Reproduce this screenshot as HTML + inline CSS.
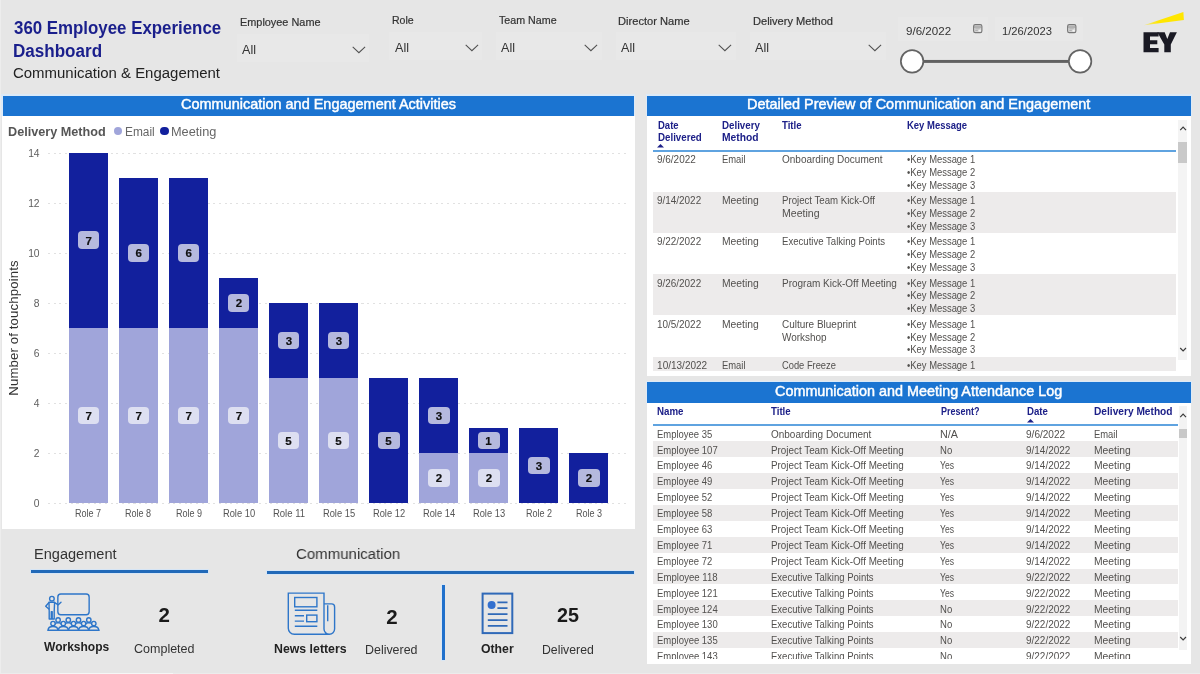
<!DOCTYPE html><html><head><meta charset="utf-8"><title>360 Employee Experience Dashboard</title><style>
html,body{margin:0;padding:0}body{width:1200px;height:674px;overflow:hidden;background:#e6e6e6;position:relative;font-family:"Liberation Sans",sans-serif}
#r{will-change:transform;position:absolute;left:0;top:0;width:1200px;height:674px;overflow:hidden}
#r div,#r span,#r svg{position:absolute}
#r span{white-space:nowrap;line-height:1em;display:block;transform-origin:0 50%}
#r span.c{transform-origin:50% 50%}
</style></head><body><div id="r">
<div style="left:237.00px;top:33.80px;width:132.00px;height:28.00px;background:#e8e8e8;"></div>
<svg style="left:352.0px;top:45.7px" width="14" height="8" viewBox="0 0 14 8"><path d="M0.700 0.900 L6.900 6.700 L13.100 0.900" fill="none" stroke="#505050" stroke-width="1.05"/></svg>
<div style="left:389.00px;top:31.60px;width:93.00px;height:28.00px;background:#e8e8e8;"></div>
<svg style="left:464.5px;top:43.8px" width="14" height="8" viewBox="0 0 14 8"><path d="M0.700 0.900 L6.900 6.700 L13.100 0.900" fill="none" stroke="#505050" stroke-width="1.05"/></svg>
<div style="left:496.00px;top:31.60px;width:106.00px;height:28.00px;background:#e8e8e8;"></div>
<svg style="left:584.2px;top:43.8px" width="14" height="8" viewBox="0 0 14 8"><path d="M0.700 0.900 L6.900 6.700 L13.100 0.900" fill="none" stroke="#505050" stroke-width="1.05"/></svg>
<div style="left:616.00px;top:31.80px;width:120.00px;height:28.00px;background:#e8e8e8;"></div>
<svg style="left:718.3px;top:43.8px" width="14" height="8" viewBox="0 0 14 8"><path d="M0.700 0.900 L6.900 6.700 L13.100 0.900" fill="none" stroke="#505050" stroke-width="1.05"/></svg>
<div style="left:750.00px;top:31.80px;width:136.00px;height:28.00px;background:#e8e8e8;"></div>
<svg style="left:867.5px;top:43.8px" width="14" height="8" viewBox="0 0 14 8"><path d="M0.700 0.900 L6.900 6.700 L13.100 0.900" fill="none" stroke="#505050" stroke-width="1.05"/></svg>
<div style="left:898.00px;top:16.50px;width:90.00px;height:24.00px;background:#e8e8e8;"></div>
<div style="left:994.70px;top:16.50px;width:88.00px;height:24.00px;background:#e8e8e8;"></div>
<svg style="left:972.6px;top:23.9px" width="10" height="10" viewBox="0 0 10 10"><rect x="0.600" y="0.600" width="8.300" height="8" rx="1.700" fill="#d4d4d4" stroke="#777" stroke-width="1.100"/><path d="M1 3H8.500" stroke="#888" stroke-width="0.900"/><path d="M2.300 4.800h4.500M2.300 6.500h2.500" stroke="#aaa" stroke-width="0.800"/><rect x="5.600" y="5.700" width="2.200" height="1.900" fill="#f4f4f4"/></svg>
<svg style="left:1066.9px;top:23.9px" width="10" height="10" viewBox="0 0 10 10"><rect x="0.600" y="0.600" width="8.300" height="8" rx="1.700" fill="#d4d4d4" stroke="#777" stroke-width="1.100"/><path d="M1 3H8.500" stroke="#888" stroke-width="0.900"/><path d="M2.300 4.800h4.500M2.300 6.500h2.500" stroke="#aaa" stroke-width="0.800"/><rect x="5.600" y="5.700" width="2.200" height="1.900" fill="#f4f4f4"/></svg>
<svg style="left:890px;top:40px" width="210" height="44" viewBox="0 0 210 44"><rect x="22" y="19.950" width="168" height="2.950" fill="#616161"/><circle cx="22.100" cy="21.350" r="11.250" fill="#fff" stroke="#636363" stroke-width="1.700"/><circle cx="190.100" cy="21.350" r="11.250" fill="#fff" stroke="#636363" stroke-width="1.700"/></svg>
<svg style="left:1140px;top:8px" width="50" height="48" viewBox="0 0 50 48"><defs><linearGradient id="bm" x1="0" x2="1" y1="0" y2="0"><stop offset="0" stop-color="#ffe600" stop-opacity="0.350"/><stop offset="0.350" stop-color="#ffe600"/></linearGradient></defs><polygon points="3.900,17.300 43.400,3.900 43.900,12.100" fill="url(#bm)"/><polygon fill="#1a1a24" points="3.500,24.300 18.600,24.300 18.600,28.600 10,28.600 10,32.200 17.300,32.200 17.300,36.300 10,36.300 10,40 18.600,40 18.600,44.300 3.500,44.300"/><polygon fill="#1a1a24" points="17.300,24.300 24.700,24.300 27.300,31 30,24.300 36.900,24.300 30.800,36.600 30.800,44.300 24.300,44.300 24.300,36.600"/></svg>
<div style="left:1.30px;top:94.40px;width:634.20px;height:21.60px;background:#dceaf8;"></div>
<div style="left:2.50px;top:95.60px;width:631.60px;height:20.30px;background:#1b74d1;"></div>
<div style="left:2.00px;top:116.00px;width:632.50px;height:413.00px;background:#fff;"></div>
<div style="left:113.6px;top:126.6px;width:8.8px;height:8.8px;border-radius:50%;background:#a0a5da"></div>
<div style="left:160.0px;top:126.6px;width:8.8px;height:8.8px;border-radius:50%;background:#12209d"></div>
<div style="left:48px;top:503.00px;width:581px;height:1.200px;background:repeating-linear-gradient(90deg,#e1e1e1 0 2px,transparent 2px 5.700px)"></div>
<div style="left:48px;top:452.96px;width:581px;height:1.200px;background:repeating-linear-gradient(90deg,#e1e1e1 0 2px,transparent 2px 5.700px)"></div>
<div style="left:48px;top:402.92px;width:581px;height:1.200px;background:repeating-linear-gradient(90deg,#e1e1e1 0 2px,transparent 2px 5.700px)"></div>
<div style="left:48px;top:352.88px;width:581px;height:1.200px;background:repeating-linear-gradient(90deg,#e1e1e1 0 2px,transparent 2px 5.700px)"></div>
<div style="left:48px;top:302.84px;width:581px;height:1.200px;background:repeating-linear-gradient(90deg,#e1e1e1 0 2px,transparent 2px 5.700px)"></div>
<div style="left:48px;top:252.80px;width:581px;height:1.200px;background:repeating-linear-gradient(90deg,#e1e1e1 0 2px,transparent 2px 5.700px)"></div>
<div style="left:48px;top:202.76px;width:581px;height:1.200px;background:repeating-linear-gradient(90deg,#e1e1e1 0 2px,transparent 2px 5.700px)"></div>
<div style="left:48px;top:152.72px;width:581px;height:1.200px;background:repeating-linear-gradient(90deg,#e1e1e1 0 2px,transparent 2px 5.700px)"></div>
<span class="c" style="left:14.1px;top:327.6px;font-size:13.2px;color:#333;transform:translate(-50%,-50%) rotate(-90deg);letter-spacing:0.13px">Number of touchpoints</span>
<div style="left:69.00px;top:327.96px;width:39.10px;height:175.14px;background:#a0a5da;"></div>
<div style="left:69.00px;top:152.82px;width:39.10px;height:175.14px;background:#12209d;"></div>
<div style="left:77.75px;top:406.63px;width:21.6px;height:17.8px;border-radius:4px;background:#dddff1"></div>
<div style="left:77.75px;top:231.49px;width:21.6px;height:17.8px;border-radius:4px;background:#b5b9de"></div>
<div style="left:119.03px;top:327.96px;width:39.10px;height:175.14px;background:#a0a5da;"></div>
<div style="left:119.03px;top:177.84px;width:39.10px;height:150.12px;background:#12209d;"></div>
<div style="left:127.78px;top:406.63px;width:21.6px;height:17.8px;border-radius:4px;background:#dddff1"></div>
<div style="left:127.78px;top:244.00px;width:21.6px;height:17.8px;border-radius:4px;background:#b5b9de"></div>
<div style="left:169.06px;top:327.96px;width:39.10px;height:175.14px;background:#a0a5da;"></div>
<div style="left:169.06px;top:177.84px;width:39.10px;height:150.12px;background:#12209d;"></div>
<div style="left:177.81px;top:406.63px;width:21.6px;height:17.8px;border-radius:4px;background:#dddff1"></div>
<div style="left:177.81px;top:244.00px;width:21.6px;height:17.8px;border-radius:4px;background:#b5b9de"></div>
<div style="left:219.09px;top:327.96px;width:39.10px;height:175.14px;background:#a0a5da;"></div>
<div style="left:219.09px;top:277.92px;width:39.10px;height:50.04px;background:#12209d;"></div>
<div style="left:227.84px;top:406.63px;width:21.6px;height:17.8px;border-radius:4px;background:#dddff1"></div>
<div style="left:227.84px;top:294.04px;width:21.6px;height:17.8px;border-radius:4px;background:#b5b9de"></div>
<div style="left:269.12px;top:378.00px;width:39.10px;height:125.10px;background:#a0a5da;"></div>
<div style="left:269.12px;top:302.94px;width:39.10px;height:75.06px;background:#12209d;"></div>
<div style="left:277.87px;top:431.65px;width:21.6px;height:17.8px;border-radius:4px;background:#dddff1"></div>
<div style="left:277.87px;top:331.57px;width:21.6px;height:17.8px;border-radius:4px;background:#b5b9de"></div>
<div style="left:319.15px;top:378.00px;width:39.10px;height:125.10px;background:#a0a5da;"></div>
<div style="left:319.15px;top:302.94px;width:39.10px;height:75.06px;background:#12209d;"></div>
<div style="left:327.90px;top:431.65px;width:21.6px;height:17.8px;border-radius:4px;background:#dddff1"></div>
<div style="left:327.90px;top:331.57px;width:21.6px;height:17.8px;border-radius:4px;background:#b5b9de"></div>
<div style="left:369.18px;top:378.00px;width:39.10px;height:125.10px;background:#12209d;"></div>
<div style="left:377.93px;top:431.65px;width:21.6px;height:17.8px;border-radius:4px;background:#b5b9de"></div>
<div style="left:419.21px;top:453.06px;width:39.10px;height:50.04px;background:#a0a5da;"></div>
<div style="left:419.21px;top:378.00px;width:39.10px;height:75.06px;background:#12209d;"></div>
<div style="left:427.96px;top:469.18px;width:21.6px;height:17.8px;border-radius:4px;background:#dddff1"></div>
<div style="left:427.96px;top:406.63px;width:21.6px;height:17.8px;border-radius:4px;background:#b5b9de"></div>
<div style="left:469.24px;top:453.06px;width:39.10px;height:50.04px;background:#a0a5da;"></div>
<div style="left:469.24px;top:428.04px;width:39.10px;height:25.02px;background:#12209d;"></div>
<div style="left:477.99px;top:469.18px;width:21.6px;height:17.8px;border-radius:4px;background:#dddff1"></div>
<div style="left:477.99px;top:431.65px;width:21.6px;height:17.8px;border-radius:4px;background:#b5b9de"></div>
<div style="left:519.27px;top:428.04px;width:39.10px;height:75.06px;background:#12209d;"></div>
<div style="left:528.02px;top:456.67px;width:21.6px;height:17.8px;border-radius:4px;background:#b5b9de"></div>
<div style="left:569.30px;top:453.06px;width:39.10px;height:50.04px;background:#12209d;"></div>
<div style="left:578.05px;top:469.18px;width:21.6px;height:17.8px;border-radius:4px;background:#b5b9de"></div>
<div style="left:30.00px;top:569.10px;width:179.30px;height:5.00px;background:#d6e5f5;"></div>
<div style="left:31.00px;top:570.10px;width:177.40px;height:3.00px;background:#2169b8;"></div>
<div style="left:265.70px;top:569.90px;width:369.30px;height:5.20px;background:#d6e5f5;"></div>
<div style="left:266.70px;top:570.90px;width:367.40px;height:3.20px;background:#2169b8;"></div>
<div style="left:441.20px;top:584.30px;width:4.20px;height:76.60px;background:#d9e7f5;"></div>
<div style="left:441.90px;top:585.00px;width:2.80px;height:75.20px;background:#2070cc;"></div>
<svg style="left:44px;top:591px" width="58" height="42" viewBox="0 0 58 42" fill="none" stroke="#2e76c9" stroke-width="1.4" stroke-linejoin="round" stroke-linecap="round">
<rect x="13.850" y="3.050" width="31.300" height="20.700" rx="3"/>
<circle cx="7.900" cy="7.700" r="2.300"/>
<path d="M5 11.300H10.600L10.200 20.200V28H8.200V20.600H7.300V28H5.200V20.200Z"/>
<path d="M5 11.500L1.700 15.200L4.900 18"/>
<path d="M10.600 11.600L14.300 13.800L17 11.300"/>
<circle cx="14.1" cy="29" r="2.2"/><path d="M10.6 33.6Q11.1 31.8 14.1 31.8Q17.1 31.8 17.6 33.6"/><circle cx="24.3" cy="29" r="2.2"/><path d="M20.8 33.6Q21.3 31.8 24.3 31.8Q27.3 31.8 27.8 33.6"/><circle cx="34.5" cy="29" r="2.2"/><path d="M31.0 33.6Q31.5 31.8 34.5 31.8Q37.5 31.8 38.0 33.6"/><circle cx="44.8" cy="29" r="2.2"/><path d="M41.3 33.6Q41.8 31.8 44.8 31.8Q47.8 31.8 48.3 33.6"/><circle cx="9" cy="32.6" r="2.2" fill="#e6e6e6"/><path d="M4.1 39.2C4.1 36.6 6.4 35.5 9 35.5S13.9 36.6 13.9 39.2"/><circle cx="19.3" cy="32.6" r="2.2" fill="#e6e6e6"/><path d="M14.4 39.2C14.4 36.6 16.7 35.5 19.3 35.5S24.2 36.6 24.2 39.2"/><circle cx="29.5" cy="32.6" r="2.2" fill="#e6e6e6"/><path d="M24.6 39.2C24.6 36.6 26.9 35.5 29.5 35.5S34.4 36.6 34.4 39.2"/><circle cx="39.6" cy="32.6" r="2.2" fill="#e6e6e6"/><path d="M34.7 39.2C34.7 36.6 37.0 35.5 39.6 35.5S44.5 36.6 44.5 39.2"/><circle cx="49.8" cy="32.6" r="2.2" fill="#e6e6e6"/><path d="M44.9 39.2C44.9 36.6 47.2 35.5 49.8 35.5S54.7 36.6 54.7 39.2"/>
<path d="M4 39.300H55" stroke-width="1.500"/>
</svg>
<svg style="left:285px;top:591px" width="53" height="46" viewBox="0 0 53 46" fill="none" stroke="#2e76c9" stroke-width="1.400">
<path d="M44.300 43.200H9.300A6 6 0 0 1 3.300 37.200V2.100H39V38A5.300 5.300 0 0 0 49.600 38V15.900A3 3 0 0 0 46.600 12.900H39"/>
<path d="M42.700 14.200V30.200"/>
<rect x="9.700" y="6.500" width="22.200" height="9.300"/>
<path d="M9.800 19.300H32.300M9.800 24.800H19M9.800 30.100H19M9.800 35.300H32.300"/>
<rect x="21.700" y="24.100" width="10.200" height="6.600"/>
</svg>
<svg style="left:480px;top:591px" width="36" height="45" viewBox="0 0 36 45" fill="none" stroke="#2f69b8" stroke-width="2">
<rect x="2.600" y="2.600" width="29.700" height="39.500"/>
<circle cx="11.600" cy="14" r="4" fill="#3370cf" stroke="none"/>
<path d="M17.400 11.400H27.500M17.400 17.200H27.500M7.800 23.200H27.500M7.800 29.200H27.500M7.800 34.900H27.500" stroke-width="1.700"/>
</svg>
<div style="left:645.80px;top:94.40px;width:546.40px;height:21.60px;background:#dceaf8;"></div>
<div style="left:647.00px;top:95.60px;width:544.00px;height:20.30px;background:#1b74d1;"></div>
<div style="left:647.00px;top:116.00px;width:544.00px;height:260.00px;background:#fff;"></div>
<svg style="left:657.2px;top:144px" width="7" height="4" viewBox="0 0 7 4"><polygon points="0,3.600 3.500,0 7,3.600" fill="#1d2088"/></svg>
<div style="left:652.50px;top:150.20px;width:523.50px;height:1.50px;background:#5fa3e0;"></div>
<div style="left:653.00px;top:191.62px;width:523.00px;height:41.22px;background:#edebeb;"></div>
<div style="left:653.00px;top:274.06px;width:523.00px;height:41.22px;background:#edebeb;"></div>
<div style="left:653.00px;top:356.50px;width:523.00px;height:14.80px;background:#edebeb;"></div>
<div style="left:1178.40px;top:120.00px;width:8.40px;height:240.00px;background:#f4f4f4;"></div>
<div style="left:1178.40px;top:141.90px;width:8.40px;height:21.60px;background:#c9c9c9;"></div>
<svg style="left:1179px;top:124.500px" width="8" height="6" viewBox="0 0 8 6"><path d="M1.200 5.100 L4.100 2.100 L7 5.100" fill="none" stroke="#3a3a3a" stroke-width="1.150"/></svg>
<svg style="left:1179px;top:347px" width="8" height="6" viewBox="0 0 8 6"><path d="M1.200 1 L4.100 4 L7 1" fill="none" stroke="#3a3a3a" stroke-width="1.150"/></svg>
<div style="left:645.80px;top:380.80px;width:546.40px;height:22.00px;background:#dceaf8;"></div>
<div style="left:647.00px;top:382.00px;width:544.00px;height:20.70px;background:#1b74d1;"></div>
<div style="left:647.00px;top:402.70px;width:544.00px;height:261.30px;background:#fff;"></div>
<svg style="left:1026.500px;top:418.600px" width="7" height="4" viewBox="0 0 7 4"><polygon points="0,3.600 3.500,0 7,3.600" fill="#1d2088"/></svg>
<div style="left:652.50px;top:424.10px;width:525.10px;height:1.50px;background:#5fa3e0;"></div>
<div style="left:653.00px;top:441.30px;width:524.60px;height:15.90px;background:#edebeb;"></div>
<div style="left:653.00px;top:473.10px;width:524.60px;height:15.90px;background:#edebeb;"></div>
<div style="left:653.00px;top:504.90px;width:524.60px;height:15.90px;background:#edebeb;"></div>
<div style="left:653.00px;top:536.70px;width:524.60px;height:15.90px;background:#edebeb;"></div>
<div style="left:653.00px;top:568.50px;width:524.60px;height:15.90px;background:#edebeb;"></div>
<div style="left:653.00px;top:600.30px;width:524.60px;height:15.90px;background:#edebeb;"></div>
<div style="left:653.00px;top:632.10px;width:524.60px;height:15.90px;background:#edebeb;"></div>
<div style="left:1178.50px;top:406.00px;width:8.50px;height:244.00px;background:#f3f3f3;"></div>
<div style="left:1178.50px;top:428.70px;width:8.50px;height:9.50px;background:#c8c8c8;"></div>
<svg style="left:1179px;top:411.500px" width="8" height="6" viewBox="0 0 8 6"><path d="M1.200 5.100 L4.100 2.100 L7 5.100" fill="none" stroke="#3a3a3a" stroke-width="1.150"/></svg>
<svg style="left:1179px;top:636px" width="8" height="6" viewBox="0 0 8 6"><path d="M1.200 1 L4.100 4 L7 1" fill="none" stroke="#3a3a3a" stroke-width="1.150"/></svg>
<span style="left:13.60px;top:19.55px;font-size:17.5px;color:#1a1f8c;font-weight:700;transform:scaleX(0.9635);">360 Employee Experience</span>
<span style="left:12.63px;top:42.55px;font-size:17.5px;color:#1a1f8c;font-weight:700;transform:scaleX(0.9742);">Dashboard</span>
<span style="left:13.40px;top:65.05px;font-size:15.5px;color:#222;transform:scaleX(0.9646);">Communication &amp; Engagement</span>
<span style="left:239.50px;top:16.90px;font-size:10.8px;color:#333;transform:scaleX(1.0087);-webkit-text-stroke:0.2px #333;">Employee Name</span>
<span style="left:242.00px;top:44.30px;font-size:12px;color:#333;transform:scaleX(1.0497);">All</span>
<span style="left:392.00px;top:14.90px;font-size:10.8px;color:#333;transform:scaleX(0.9775);-webkit-text-stroke:0.2px #333;">Role</span>
<span style="left:394.70px;top:42.30px;font-size:12px;color:#333;transform:scaleX(1.0497);">All</span>
<span style="left:499.20px;top:14.90px;font-size:10.8px;color:#333;transform:scaleX(0.9897);-webkit-text-stroke:0.2px #333;">Team Name</span>
<span style="left:501.40px;top:42.30px;font-size:12px;color:#333;transform:scaleX(1.0497);">All</span>
<span style="left:618.30px;top:15.90px;font-size:10.8px;color:#333;transform:scaleX(1.0303);-webkit-text-stroke:0.2px #333;">Director Name</span>
<span style="left:621.30px;top:42.30px;font-size:12px;color:#333;transform:scaleX(1.0497);">All</span>
<span style="left:752.50px;top:15.90px;font-size:10.8px;color:#333;transform:scaleX(1.0256);-webkit-text-stroke:0.2px #333;">Delivery Method</span>
<span style="left:755.00px;top:42.30px;font-size:12px;color:#333;transform:scaleX(1.0497);">All</span>
<span style="left:905.90px;top:25.65px;font-size:11.3px;color:#333;transform:scaleX(1.0254);">9/6/2022</span>
<span style="left:1001.90px;top:25.65px;font-size:11.3px;color:#333;transform:scaleX(0.9925);">1/26/2023</span>
<span style="left:180.80px;top:97.15px;font-size:14.3px;color:#fff;transform:scaleX(1.0120);-webkit-text-stroke:0.45px #fff;">Communication and Engagement Activities</span>
<span style="left:8.00px;top:126.05px;font-size:12.5px;color:#555;font-weight:700;transform:scaleX(1.0113);">Delivery Method</span>
<span style="left:124.65px;top:126.05px;font-size:12.5px;color:#666;transform:scaleX(0.9498);">Email</span>
<span style="left:170.98px;top:126.05px;font-size:12.5px;color:#666;transform:scaleX(1.0203);">Meeting</span>
<span style="left:39.60px;top:498.65px;font-size:10.3px;color:#5e5e5e;transform:translateX(-100%);">0</span>
<span style="left:39.60px;top:448.65px;font-size:10.3px;color:#5e5e5e;transform:translateX(-100%);">2</span>
<span style="left:39.60px;top:398.65px;font-size:10.3px;color:#5e5e5e;transform:translateX(-100%);">4</span>
<span style="left:39.60px;top:348.65px;font-size:10.3px;color:#5e5e5e;transform:translateX(-100%);">6</span>
<span style="left:39.60px;top:298.65px;font-size:10.3px;color:#5e5e5e;transform:translateX(-100%);">8</span>
<span style="left:39.60px;top:248.65px;font-size:10.3px;color:#5e5e5e;transform:translateX(-100%);">10</span>
<span style="left:39.60px;top:198.65px;font-size:10.3px;color:#5e5e5e;transform:translateX(-100%);">12</span>
<span style="left:39.60px;top:148.65px;font-size:10.3px;color:#5e5e5e;transform:translateX(-100%);">14</span>
<span class="c" style="left:88.75px;top:410.55px;font-size:11.5px;color:#111;font-weight:700;transform:translateX(-50%);-webkit-text-stroke:0.2px #111;">7</span>
<span class="c" style="left:88.75px;top:235.55px;font-size:11.5px;color:#111;font-weight:700;transform:translateX(-50%);-webkit-text-stroke:0.2px #111;">7</span>
<span class="c" style="left:88.45px;top:508.60px;font-size:10.4px;color:#555;transform:translateX(-50%) scaleX(0.8692);">Role 7</span>
<span class="c" style="left:138.78px;top:410.55px;font-size:11.5px;color:#111;font-weight:700;transform:translateX(-50%);-webkit-text-stroke:0.2px #111;">7</span>
<span class="c" style="left:138.78px;top:247.55px;font-size:11.5px;color:#111;font-weight:700;transform:translateX(-50%);-webkit-text-stroke:0.2px #111;">6</span>
<span class="c" style="left:138.48px;top:508.60px;font-size:10.4px;color:#555;transform:translateX(-50%) scaleX(0.8692);">Role 8</span>
<span class="c" style="left:188.81px;top:410.55px;font-size:11.5px;color:#111;font-weight:700;transform:translateX(-50%);-webkit-text-stroke:0.2px #111;">7</span>
<span class="c" style="left:188.81px;top:247.55px;font-size:11.5px;color:#111;font-weight:700;transform:translateX(-50%);-webkit-text-stroke:0.2px #111;">6</span>
<span class="c" style="left:188.51px;top:508.60px;font-size:10.4px;color:#555;transform:translateX(-50%) scaleX(0.8692);">Role 9</span>
<span class="c" style="left:238.84px;top:410.55px;font-size:11.5px;color:#111;font-weight:700;transform:translateX(-50%);-webkit-text-stroke:0.2px #111;">7</span>
<span class="c" style="left:238.84px;top:297.55px;font-size:11.5px;color:#111;font-weight:700;transform:translateX(-50%);-webkit-text-stroke:0.2px #111;">2</span>
<span class="c" style="left:238.54px;top:508.60px;font-size:10.4px;color:#555;transform:translateX(-50%) scaleX(0.8991);">Role 10</span>
<span class="c" style="left:288.37px;top:435.55px;font-size:11.5px;color:#111;font-weight:700;transform:translateX(-50%);-webkit-text-stroke:0.2px #111;">5</span>
<span class="c" style="left:288.87px;top:335.55px;font-size:11.5px;color:#111;font-weight:700;transform:translateX(-50%);-webkit-text-stroke:0.2px #111;">3</span>
<span class="c" style="left:288.57px;top:508.60px;font-size:10.4px;color:#555;transform:translateX(-50%) scaleX(0.9188);">Role 11</span>
<span class="c" style="left:338.40px;top:435.55px;font-size:11.5px;color:#111;font-weight:700;transform:translateX(-50%);-webkit-text-stroke:0.2px #111;">5</span>
<span class="c" style="left:338.90px;top:335.55px;font-size:11.5px;color:#111;font-weight:700;transform:translateX(-50%);-webkit-text-stroke:0.2px #111;">3</span>
<span class="c" style="left:338.60px;top:508.60px;font-size:10.4px;color:#555;transform:translateX(-50%) scaleX(0.8991);">Role 15</span>
<span class="c" style="left:388.43px;top:435.55px;font-size:11.5px;color:#111;font-weight:700;transform:translateX(-50%);-webkit-text-stroke:0.2px #111;">5</span>
<span class="c" style="left:388.63px;top:508.60px;font-size:10.4px;color:#555;transform:translateX(-50%) scaleX(0.8991);">Role 12</span>
<span class="c" style="left:438.96px;top:472.55px;font-size:11.5px;color:#111;font-weight:700;transform:translateX(-50%);-webkit-text-stroke:0.2px #111;">2</span>
<span class="c" style="left:438.96px;top:410.55px;font-size:11.5px;color:#111;font-weight:700;transform:translateX(-50%);-webkit-text-stroke:0.2px #111;">3</span>
<span class="c" style="left:438.66px;top:508.60px;font-size:10.4px;color:#555;transform:translateX(-50%) scaleX(0.8991);">Role 14</span>
<span class="c" style="left:488.99px;top:472.55px;font-size:11.5px;color:#111;font-weight:700;transform:translateX(-50%);-webkit-text-stroke:0.2px #111;">2</span>
<span class="c" style="left:488.49px;top:435.55px;font-size:11.5px;color:#111;font-weight:700;transform:translateX(-50%);-webkit-text-stroke:0.2px #111;">1</span>
<span class="c" style="left:488.69px;top:508.60px;font-size:10.4px;color:#555;transform:translateX(-50%) scaleX(0.8991);">Role 13</span>
<span class="c" style="left:539.02px;top:460.55px;font-size:11.5px;color:#111;font-weight:700;transform:translateX(-50%);-webkit-text-stroke:0.2px #111;">3</span>
<span class="c" style="left:538.72px;top:508.60px;font-size:10.4px;color:#555;transform:translateX(-50%) scaleX(0.8692);">Role 2</span>
<span class="c" style="left:589.05px;top:472.55px;font-size:11.5px;color:#111;font-weight:700;transform:translateX(-50%);-webkit-text-stroke:0.2px #111;">2</span>
<span class="c" style="left:588.75px;top:508.60px;font-size:10.4px;color:#555;transform:translateX(-50%) scaleX(0.8692);">Role 3</span>
<span style="left:34.06px;top:546.05px;font-size:15.5px;color:#333;transform:scaleX(0.9396);">Engagement</span>
<span style="left:43.70px;top:640.30px;font-size:13px;color:#222;font-weight:700;transform:scaleX(0.9244);">Workshops</span>
<span class="c" style="left:164.20px;top:604.55px;font-size:20.5px;color:#1a1a1a;font-weight:700;transform:translateX(-50%);">2</span>
<span style="left:134.00px;top:642.30px;font-size:13px;color:#333;transform:scaleX(0.9627);">Completed</span>
<span style="left:295.70px;top:546.05px;font-size:15.5px;color:#333;transform:scaleX(0.9677);">Communication</span>
<span style="left:274.30px;top:642.30px;font-size:13px;color:#222;font-weight:700;transform:scaleX(0.9481);">News letters</span>
<span class="c" style="left:391.90px;top:606.55px;font-size:20.5px;color:#1a1a1a;font-weight:700;transform:translateX(-50%);">2</span>
<span style="left:365.04px;top:643.30px;font-size:13px;color:#333;transform:scaleX(0.9556);">Delivered</span>
<span style="left:480.70px;top:642.30px;font-size:13px;color:#222;font-weight:700;transform:scaleX(0.9419);">Other</span>
<span style="left:556.70px;top:604.55px;font-size:20.5px;color:#1a1a1a;font-weight:700;transform:scaleX(0.9642);">25</span>
<span style="left:541.76px;top:643.30px;font-size:13px;color:#333;transform:scaleX(0.9426);">Delivered</span>
<span style="left:746.99px;top:97.15px;font-size:14.3px;color:#fff;transform:scaleX(1.0119);-webkit-text-stroke:0.45px #fff;">Detailed Preview of Communication and Engagement</span>
<span style="left:657.80px;top:120.80px;font-size:10px;color:#1d2088;font-weight:700;transform:scaleX(0.9497);">Date</span>
<span style="left:657.80px;top:132.80px;font-size:10px;color:#1d2088;font-weight:700;transform:scaleX(0.9729);">Delivered</span>
<span style="left:722.20px;top:120.80px;font-size:10px;color:#1d2088;font-weight:700;transform:scaleX(0.9732);">Delivery</span>
<span style="left:722.20px;top:132.80px;font-size:10px;color:#1d2088;font-weight:700;transform:scaleX(1.0271);">Method</span>
<span style="left:782.00px;top:120.80px;font-size:10px;color:#1d2088;font-weight:700;transform:scaleX(0.9609);">Title</span>
<span style="left:907.00px;top:120.80px;font-size:10px;color:#1d2088;font-weight:700;transform:scaleX(0.9482);">Key Message</span>
<span style="left:657.10px;top:154.80px;font-size:10px;color:#52504e;transform:scaleX(0.9958);">9/6/2022</span>
<span style="left:722.00px;top:154.80px;font-size:10px;color:#52504e;transform:scaleX(0.9402);">Email</span>
<span style="left:782.00px;top:154.80px;font-size:10px;color:#52504e;">Onboarding Document</span>
<span style="left:907.00px;top:154.80px;font-size:10px;color:#52504e;transform:scaleX(0.9415);">•Key Message 1</span>
<span style="left:907.00px;top:167.80px;font-size:10px;color:#52504e;transform:scaleX(0.9415);">•Key Message 2</span>
<span style="left:907.00px;top:180.80px;font-size:10px;color:#52504e;transform:scaleX(0.9415);">•Key Message 3</span>
<span style="left:657.10px;top:195.80px;font-size:10px;color:#52504e;transform:scaleX(0.9927);">9/14/2022</span>
<span style="left:722.00px;top:195.80px;font-size:10px;color:#52504e;transform:scaleX(1.0339);">Meeting</span>
<span style="left:782.00px;top:195.80px;font-size:10px;color:#52504e;transform:scaleX(0.9645);">Project Team Kick-Off</span>
<span style="left:782.00px;top:208.80px;font-size:10px;color:#52504e;transform:scaleX(1.0567);">Meeting</span>
<span style="left:907.00px;top:195.80px;font-size:10px;color:#52504e;transform:scaleX(0.9415);">•Key Message 1</span>
<span style="left:907.00px;top:208.80px;font-size:10px;color:#52504e;transform:scaleX(0.9415);">•Key Message 2</span>
<span style="left:907.00px;top:221.80px;font-size:10px;color:#52504e;transform:scaleX(0.9415);">•Key Message 3</span>
<span style="left:657.10px;top:236.80px;font-size:10px;color:#52504e;transform:scaleX(0.9927);">9/22/2022</span>
<span style="left:722.00px;top:236.80px;font-size:10px;color:#52504e;transform:scaleX(1.0339);">Meeting</span>
<span style="left:782.00px;top:236.80px;font-size:10px;color:#52504e;transform:scaleX(0.9580);">Executive Talking Points</span>
<span style="left:907.00px;top:236.80px;font-size:10px;color:#52504e;transform:scaleX(0.9415);">•Key Message 1</span>
<span style="left:907.00px;top:249.80px;font-size:10px;color:#52504e;transform:scaleX(0.9415);">•Key Message 2</span>
<span style="left:907.00px;top:262.80px;font-size:10px;color:#52504e;transform:scaleX(0.9415);">•Key Message 3</span>
<span style="left:657.10px;top:278.80px;font-size:10px;color:#52504e;transform:scaleX(0.9927);">9/26/2022</span>
<span style="left:722.00px;top:278.80px;font-size:10px;color:#52504e;transform:scaleX(1.0339);">Meeting</span>
<span style="left:782.00px;top:278.80px;font-size:10px;color:#52504e;">Program Kick-Off Meeting</span>
<span style="left:907.00px;top:278.80px;font-size:10px;color:#52504e;transform:scaleX(0.9415);">•Key Message 1</span>
<span style="left:907.00px;top:290.80px;font-size:10px;color:#52504e;transform:scaleX(0.9415);">•Key Message 2</span>
<span style="left:907.00px;top:303.80px;font-size:10px;color:#52504e;transform:scaleX(0.9415);">•Key Message 3</span>
<span style="left:657.10px;top:319.80px;font-size:10px;color:#52504e;transform:scaleX(0.9927);">10/5/2022</span>
<span style="left:722.00px;top:319.80px;font-size:10px;color:#52504e;transform:scaleX(1.0339);">Meeting</span>
<span style="left:782.00px;top:319.80px;font-size:10px;color:#52504e;transform:scaleX(0.9973);">Culture Blueprint</span>
<span style="left:782.00px;top:332.80px;font-size:10px;color:#52504e;transform:scaleX(0.9940);">Workshop</span>
<span style="left:907.00px;top:319.80px;font-size:10px;color:#52504e;transform:scaleX(0.9415);">•Key Message 1</span>
<span style="left:907.00px;top:332.80px;font-size:10px;color:#52504e;transform:scaleX(0.9415);">•Key Message 2</span>
<span style="left:907.00px;top:344.80px;font-size:10px;color:#52504e;transform:scaleX(0.9415);">•Key Message 3</span>
<span style="left:657.10px;top:360.80px;font-size:10px;color:#52504e;">10/13/2022</span>
<span style="left:722.00px;top:360.80px;font-size:10px;color:#52504e;transform:scaleX(0.9402);">Email</span>
<span style="left:782.00px;top:360.80px;font-size:10px;color:#52504e;transform:scaleX(0.9323);">Code Freeze</span>
<span style="left:907.00px;top:360.80px;font-size:10px;color:#52504e;transform:scaleX(0.9415);">•Key Message 1</span>
<span style="left:774.70px;top:384.15px;font-size:14.3px;color:#fff;transform:scaleX(1.0064);-webkit-text-stroke:0.45px #fff;">Communication and Meeting Attendance Log</span>
<span style="left:657.10px;top:406.80px;font-size:10px;color:#1d2088;font-weight:700;transform:scaleX(0.9720);">Name</span>
<span style="left:771.20px;top:406.80px;font-size:10px;color:#1d2088;font-weight:700;transform:scaleX(0.9657);">Title</span>
<span style="left:940.80px;top:406.80px;font-size:10px;color:#1d2088;font-weight:700;transform:scaleX(0.8996);">Present?</span>
<span style="left:1026.70px;top:406.80px;font-size:10px;color:#1d2088;font-weight:700;transform:scaleX(0.9632);">Date</span>
<span style="left:1094.00px;top:406.80px;font-size:10px;color:#1d2088;font-weight:700;transform:scaleX(1.0164);">Delivery Method</span>
<span style="left:657.10px;top:429.80px;font-size:10px;color:#52504e;transform:scaleX(0.9455);">Employee 35</span>
<span style="left:771.20px;top:429.80px;font-size:10px;color:#52504e;transform:scaleX(0.9977);">Onboarding Document</span>
<span style="left:940.00px;top:429.80px;font-size:10px;color:#52504e;transform:scaleX(1.0765);">N/A</span>
<span style="left:1026.40px;top:429.80px;font-size:10px;color:#52504e;transform:scaleX(1.0060);">9/6/2022</span>
<span style="left:1094.00px;top:429.80px;font-size:10px;color:#52504e;transform:scaleX(0.9402);">Email</span>
<span style="left:657.10px;top:445.80px;font-size:10px;color:#52504e;transform:scaleX(0.9492);">Employee 107</span>
<span style="left:771.20px;top:445.80px;font-size:10px;color:#52504e;transform:scaleX(0.9851);">Project Team Kick-Off Meeting</span>
<span style="left:940.00px;top:445.80px;font-size:10px;color:#52504e;transform:scaleX(0.9530);">No</span>
<span style="left:1026.40px;top:445.80px;font-size:10px;color:#52504e;transform:scaleX(0.9972);">9/14/2022</span>
<span style="left:1094.00px;top:445.80px;font-size:10px;color:#52504e;transform:scaleX(1.0339);">Meeting</span>
<span style="left:657.10px;top:460.80px;font-size:10px;color:#52504e;transform:scaleX(0.9455);">Employee 46</span>
<span style="left:771.20px;top:460.80px;font-size:10px;color:#52504e;transform:scaleX(0.9851);">Project Team Kick-Off Meeting</span>
<span style="left:940.00px;top:460.80px;font-size:10px;color:#52504e;transform:scaleX(0.8582);">Yes</span>
<span style="left:1026.40px;top:460.80px;font-size:10px;color:#52504e;transform:scaleX(0.9972);">9/14/2022</span>
<span style="left:1094.00px;top:460.80px;font-size:10px;color:#52504e;transform:scaleX(1.0339);">Meeting</span>
<span style="left:657.10px;top:476.80px;font-size:10px;color:#52504e;transform:scaleX(0.9455);">Employee 49</span>
<span style="left:771.20px;top:476.80px;font-size:10px;color:#52504e;transform:scaleX(0.9851);">Project Team Kick-Off Meeting</span>
<span style="left:940.00px;top:476.80px;font-size:10px;color:#52504e;transform:scaleX(0.8582);">Yes</span>
<span style="left:1026.40px;top:476.80px;font-size:10px;color:#52504e;transform:scaleX(0.9972);">9/14/2022</span>
<span style="left:1094.00px;top:476.80px;font-size:10px;color:#52504e;transform:scaleX(1.0339);">Meeting</span>
<span style="left:657.10px;top:492.80px;font-size:10px;color:#52504e;transform:scaleX(0.9455);">Employee 52</span>
<span style="left:771.20px;top:492.80px;font-size:10px;color:#52504e;transform:scaleX(0.9851);">Project Team Kick-Off Meeting</span>
<span style="left:940.00px;top:492.80px;font-size:10px;color:#52504e;transform:scaleX(0.8582);">Yes</span>
<span style="left:1026.40px;top:492.80px;font-size:10px;color:#52504e;transform:scaleX(0.9972);">9/14/2022</span>
<span style="left:1094.00px;top:492.80px;font-size:10px;color:#52504e;transform:scaleX(1.0339);">Meeting</span>
<span style="left:657.10px;top:508.80px;font-size:10px;color:#52504e;transform:scaleX(0.9455);">Employee 58</span>
<span style="left:771.20px;top:508.80px;font-size:10px;color:#52504e;transform:scaleX(0.9851);">Project Team Kick-Off Meeting</span>
<span style="left:940.00px;top:508.80px;font-size:10px;color:#52504e;transform:scaleX(0.8582);">Yes</span>
<span style="left:1026.40px;top:508.80px;font-size:10px;color:#52504e;transform:scaleX(0.9972);">9/14/2022</span>
<span style="left:1094.00px;top:508.80px;font-size:10px;color:#52504e;transform:scaleX(1.0339);">Meeting</span>
<span style="left:657.10px;top:524.80px;font-size:10px;color:#52504e;transform:scaleX(0.9455);">Employee 63</span>
<span style="left:771.20px;top:524.80px;font-size:10px;color:#52504e;transform:scaleX(0.9851);">Project Team Kick-Off Meeting</span>
<span style="left:940.00px;top:524.80px;font-size:10px;color:#52504e;transform:scaleX(0.8582);">Yes</span>
<span style="left:1026.40px;top:524.80px;font-size:10px;color:#52504e;transform:scaleX(0.9972);">9/14/2022</span>
<span style="left:1094.00px;top:524.80px;font-size:10px;color:#52504e;transform:scaleX(1.0339);">Meeting</span>
<span style="left:657.10px;top:540.80px;font-size:10px;color:#52504e;transform:scaleX(0.9455);">Employee 71</span>
<span style="left:771.20px;top:540.80px;font-size:10px;color:#52504e;transform:scaleX(0.9851);">Project Team Kick-Off Meeting</span>
<span style="left:940.00px;top:540.80px;font-size:10px;color:#52504e;transform:scaleX(0.8582);">Yes</span>
<span style="left:1026.40px;top:540.80px;font-size:10px;color:#52504e;transform:scaleX(0.9972);">9/14/2022</span>
<span style="left:1094.00px;top:540.80px;font-size:10px;color:#52504e;transform:scaleX(1.0339);">Meeting</span>
<span style="left:657.10px;top:556.80px;font-size:10px;color:#52504e;transform:scaleX(0.9455);">Employee 72</span>
<span style="left:771.20px;top:556.80px;font-size:10px;color:#52504e;transform:scaleX(0.9851);">Project Team Kick-Off Meeting</span>
<span style="left:940.00px;top:556.80px;font-size:10px;color:#52504e;transform:scaleX(0.8582);">Yes</span>
<span style="left:1026.40px;top:556.80px;font-size:10px;color:#52504e;transform:scaleX(0.9972);">9/14/2022</span>
<span style="left:1094.00px;top:556.80px;font-size:10px;color:#52504e;transform:scaleX(1.0339);">Meeting</span>
<span style="left:657.10px;top:572.80px;font-size:10px;color:#52504e;transform:scaleX(0.9603);">Employee 118</span>
<span style="left:771.20px;top:572.80px;font-size:10px;color:#52504e;transform:scaleX(0.9533);">Executive Talking Points</span>
<span style="left:940.00px;top:572.80px;font-size:10px;color:#52504e;transform:scaleX(0.8582);">Yes</span>
<span style="left:1026.40px;top:572.80px;font-size:10px;color:#52504e;transform:scaleX(0.9972);">9/22/2022</span>
<span style="left:1094.00px;top:572.80px;font-size:10px;color:#52504e;transform:scaleX(1.0339);">Meeting</span>
<span style="left:657.10px;top:588.80px;font-size:10px;color:#52504e;transform:scaleX(0.9492);">Employee 121</span>
<span style="left:771.20px;top:588.80px;font-size:10px;color:#52504e;transform:scaleX(0.9533);">Executive Talking Points</span>
<span style="left:940.00px;top:588.80px;font-size:10px;color:#52504e;transform:scaleX(0.8582);">Yes</span>
<span style="left:1026.40px;top:588.80px;font-size:10px;color:#52504e;transform:scaleX(0.9972);">9/22/2022</span>
<span style="left:1094.00px;top:588.80px;font-size:10px;color:#52504e;transform:scaleX(1.0339);">Meeting</span>
<span style="left:657.10px;top:604.80px;font-size:10px;color:#52504e;transform:scaleX(0.9492);">Employee 124</span>
<span style="left:771.20px;top:604.80px;font-size:10px;color:#52504e;transform:scaleX(0.9533);">Executive Talking Points</span>
<span style="left:940.00px;top:604.80px;font-size:10px;color:#52504e;transform:scaleX(0.9530);">No</span>
<span style="left:1026.40px;top:604.80px;font-size:10px;color:#52504e;transform:scaleX(0.9972);">9/22/2022</span>
<span style="left:1094.00px;top:604.80px;font-size:10px;color:#52504e;transform:scaleX(1.0339);">Meeting</span>
<span style="left:657.10px;top:619.80px;font-size:10px;color:#52504e;transform:scaleX(0.9492);">Employee 130</span>
<span style="left:771.20px;top:619.80px;font-size:10px;color:#52504e;transform:scaleX(0.9533);">Executive Talking Points</span>
<span style="left:940.00px;top:619.80px;font-size:10px;color:#52504e;transform:scaleX(0.9530);">No</span>
<span style="left:1026.40px;top:619.80px;font-size:10px;color:#52504e;transform:scaleX(0.9972);">9/22/2022</span>
<span style="left:1094.00px;top:619.80px;font-size:10px;color:#52504e;transform:scaleX(1.0339);">Meeting</span>
<span style="left:657.10px;top:635.80px;font-size:10px;color:#52504e;transform:scaleX(0.9492);">Employee 135</span>
<span style="left:771.20px;top:635.80px;font-size:10px;color:#52504e;transform:scaleX(0.9533);">Executive Talking Points</span>
<span style="left:940.00px;top:635.80px;font-size:10px;color:#52504e;transform:scaleX(0.9530);">No</span>
<span style="left:1026.40px;top:635.80px;font-size:10px;color:#52504e;transform:scaleX(0.9972);">9/22/2022</span>
<span style="left:1094.00px;top:635.80px;font-size:10px;color:#52504e;transform:scaleX(1.0339);">Meeting</span>
<span style="left:657.10px;top:651.80px;font-size:10px;color:#52504e;transform:scaleX(0.9492);">Employee 143</span>
<span style="left:771.20px;top:651.80px;font-size:10px;color:#52504e;transform:scaleX(0.9533);">Executive Talking Points</span>
<span style="left:940.00px;top:651.80px;font-size:10px;color:#52504e;transform:scaleX(0.9530);">No</span>
<span style="left:1026.40px;top:651.80px;font-size:10px;color:#52504e;transform:scaleX(0.9972);">9/22/2022</span>
<span style="left:1094.00px;top:651.80px;font-size:10px;color:#52504e;transform:scaleX(1.0339);">Meeting</span>
<div style="left:647px;top:658.6px;width:531px;height:5.4px;background:#fff"></div>
<div style="left:0;top:664px;width:1200px;height:10px;background:#e6e6e6"></div>
<div style="left:0;top:672.700px;width:1200px;height:1.300px;background:#ececec"></div>
<div style="left:50px;top:672.500px;width:123px;height:1.500px;background:#f6f6f6"></div>
<div style="left:0;top:0;width:1.200px;height:674px;background:#ededed"></div>
</div></body></html>
